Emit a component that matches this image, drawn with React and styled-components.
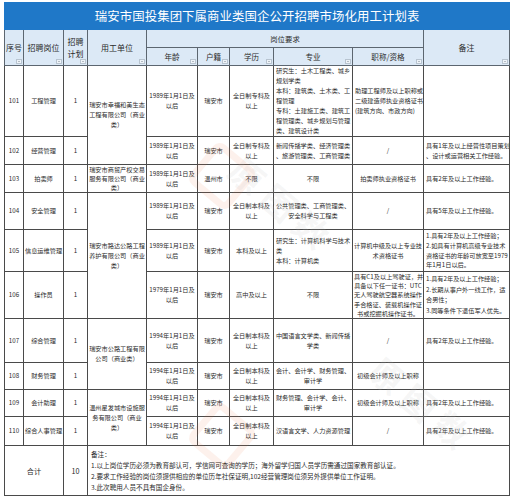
import React from "react";
import styled, { createGlobalStyle } from "styled-components";

const GlobalStyle = createGlobalStyle`
  html, body { margin: 0; padding: 0; background: #ffffff; }
  body { font-family: "Noto Sans CJK SC", "Noto Sans", sans-serif; color: #2a2a2a; }
`;

const Page = styled.div`
  position: relative;
  padding: 2px 0 0 4px;
  width: 514px;
  height: 500px;
  box-sizing: border-box;
  overflow: hidden;
`;

const Sheet = styled.table`
  border-collapse: collapse;
  table-layout: fixed;
  width: 505px;
`;

const TitleCell = styled.td`
  background: #1f78c8;
  color: #ffffff;
  font-size: 12.4px;
  text-align: center;
  height: 26px;
  padding: 0;
  border: 1px solid #1f78c8;
  letter-spacing: 0.1px;
`;

const HeadCell = styled.th`
  position: relative;
  background: #dce9f6;
  color: #2b2b2b;
  font-weight: 400;
  font-size: ${(p) => p.$size || 8}px;
  line-height: ${(p) => p.$lh || 11}px;
  border: 1px solid #5c6670;
  padding: 0;
  text-align: center;
  white-space: nowrap;
`;

const Arrow = styled.span`
  position: absolute;
  right: 1px;
  bottom: 1px;
  width: 4px;
  height: 3px;
  background: #eef3f8;
  border: 0.5px solid #b8c4d0;
  &::after {
    content: "";
    position: absolute;
    left: 1px;
    top: 1px;
    border-left: 1px solid transparent;
    border-right: 1px solid transparent;
    border-top: 1px solid #7a8590;
  }
`;

const Row = styled.tr`
  height: ${(p) => p.$h}px;
`;

const Cell = styled.td`
  border: 1px solid #4a4a4a;
  font-size: 6.2px;
  line-height: ${(p) => p.$lh || 10}px;
  text-align: ${(p) => p.$align || "center"};
  vertical-align: middle;
  padding: 0 ${(p) => (p.$align === "left" ? "1px 0 2px" : "1px")};
  white-space: nowrap;
  overflow: hidden;
  color: #2a2a2a;
`;

const NoteCell = styled(Cell)`
  font-size: 6.6px;
  line-height: 11px;
  padding-left: 3px;
`;

const TotalCell = styled(Cell)`
  font-size: 7.2px;
`;

const Watermark = styled.div`
  position: absolute;
  left: ${(p) => p.$x}px;
  top: ${(p) => p.$y}px;
  transform: rotate(40deg);
  font-size: 34px;
  font-weight: 700;
  color: rgba(190, 190, 190, 0.14);
  letter-spacing: 8px;
  pointer-events: none;
  white-space: nowrap;
`;

const Badge = styled.div`
  position: absolute;
  left: ${(p) => p.$x}px;
  top: ${(p) => p.$y}px;
  width: 38px;
  height: 38px;
  border-radius: 9px;
  border: 7px solid rgba(238, 120, 70, 0.1);
  transform: rotate(40deg);
  pointer-events: none;
`;

const Lines = ({ t }) =>
  t.split("\n").map((s, i, a) => (
    <React.Fragment key={i}>
      {s}
      {i < a.length - 1 && <br />}
    </React.Fragment>
  ));

const AGE89 = "1989年1月1日及\n以后";
const AGE94 = "1994年1月1日及\n以后";
const FULL_BK = "全日制本科及\n以上";
const EXP2 = "具有2年及以上工作经验。";

const rows = [
  {
    id: "101", post: "工程管理", h: 70,
    unit: { text: "瑞安市幸福和美生态\n工程有限公司（商业\n类）", span: 2 },
    age: AGE89, home: "瑞安市", edu: "全日制专科及\n以上",
    major: { text: "研究生：土木工程类、城乡\n规划学类\n本科：建筑类、土木类、工\n程管理\n专科：土建施工类、建筑工\n程管理类、城乡规划与管理\n类、建筑设计类", align: "left" },
    cert: { text: "助理工程师及以上职称或\n二级建造师执业资格证书\n(建筑方向、市政方向)", align: "left" },
    note: { text: "" },
  },
  {
    id: "102", post: "经营管理", h: 28,
    age: AGE89, home: "瑞安市", edu: "全日制专科及\n以上",
    major: { text: "新闻传播学类、经济管理类\n、旅游管理类、工商管理类" },
    cert: { text: "/" },
    note: { text: "具有1年及以上经营性项目策划\n、设计或运营相关工作经验。" },
  },
  {
    id: "103", post: "拍卖师", h: 28,
    unit: { text: "瑞安市商贸产权交易\n服务有限公司（商业\n类）", span: 1, lh: 9 },
    age: AGE89, home: "温州市", edu: "不限",
    major: { text: "不限" },
    cert: { text: "拍卖师执业资格证书" },
    note: { text: EXP2 },
  },
  {
    id: "104", post: "安全管理", h: 37,
    unit: { text: "瑞安市路达公路工程\n养护有限公司（商业\n类）", span: 3 },
    age: AGE89, home: "瑞安市", edu: FULL_BK,
    major: { text: "公共管理类、工商管理类、\n安全科学与工程类" },
    cert: { text: "/" },
    note: { text: "具有5年及以上工作经验。" },
  },
  {
    id: "105", post: "信息运维管理", h: 42,
    age: AGE89, home: "瑞安市", edu: "本科及以上",
    major: { text: "研究生：计算机科学与技术\n类\n本科：计算机类", align: "left" },
    cert: { text: "计算机中级及以上专业技\n术资格证书" },
    note: { text: "1.具有2年及以上工作经验；\n2.如具有计算机高级专业技术\n资格证书的年龄可放宽至1979\n年1月1日以后。", lh: 9.6 },
  },
  {
    id: "106", post: "操作员", h: 47,
    age: "1979年1月1日及\n以后", home: "瑞安市", edu: "高中及以上",
    major: { text: "不限" },
    cert: { text: "具有C1及以上驾驶证，并\n具备以下任一证书：UTC\n无人驾驶航空器系统操作\n手合格证、装载机操作证\n书或挖掘机操作证书。", lh: 9.2 },
    note: { text: "1.具有2年及以上工作经验；\n2.长期从事户外一线工作，适\n合男性；\n3.同等条件下退伍军人优先。", lh: 10.5 },
  },
  {
    id: "107", post: "综合管理", h: 44,
    unit: { text: "瑞安市公路工程有限\n公司（商业类）", span: 2 },
    age: AGE94, home: "瑞安市", edu: FULL_BK,
    major: { text: "中国语言文学类、新闻传播\n学类" },
    cert: { text: "/" },
    note: { text: EXP2 },
  },
  {
    id: "108", post: "财务管理", h: 27,
    age: AGE94, home: "瑞安市", edu: FULL_BK,
    major: { text: "会计、会计学、财务管理、\n审计学" },
    cert: { text: "初级会计师及以上职称" },
    note: { text: "" },
  },
  {
    id: "109", post: "会计助理", h: 27,
    unit: { text: "温州星发城市设施服\n务有限公司（商业\n类）", span: 2 },
    age: AGE94, home: "瑞安市", edu: FULL_BK,
    major: { text: "财务管理、会计学、会计、\n审计学" },
    cert: { text: "初级会计师及以上职称" },
    note: { text: EXP2 },
  },
  {
    id: "110", post: "综合人事管理", h: 29,
    age: AGE94, home: "瑞安市", edu: FULL_BK,
    major: { text: "汉语言文学、人力资源管理" },
    cert: { text: "/" },
    note: { text: EXP2 },
  },
];

const Head = ({ children, arrow = true, ...rest }) => (
  <HeadCell {...rest}>
    {children}
    {arrow && <Arrow />}
  </HeadCell>
);

export default function App() {
  return (
    <>
      <GlobalStyle />
      <Page>
        <Sheet>
          <colgroup>
            <col style={{ width: 19 }} />
            <col style={{ width: 40 }} />
            <col style={{ width: 24 }} />
            <col style={{ width: 59 }} />
            <col style={{ width: 51 }} />
            <col style={{ width: 32 }} />
            <col style={{ width: 44 }} />
            <col style={{ width: 79 }} />
            <col style={{ width: 71 }} />
            <col style={{ width: 86 }} />
          </colgroup>
          <tbody>
            <tr>
              <TitleCell colSpan={10}>
                瑞安市国投集团下属商业类国企公开招聘市场化用工计划表
              </TitleCell>
            </tr>
            <Row $h={18}>
              <Head rowSpan={2} $size={8}>序号</Head>
              <Head rowSpan={2} $size={8}>招聘岗位</Head>
              <Head rowSpan={2} $size={8} $lh={12}>
                招聘
                <br />
                计划
              </Head>
              <Head rowSpan={2} $size={8}>用工单位</Head>
              <Head colSpan={5} arrow={false} $size={7.4}>岗位要求</Head>
              <Head rowSpan={2} $size={8}>备注</Head>
            </Row>
            <Row $h={18}>
              <Head $size={7.6}>年龄</Head>
              <Head $size={7.6}>户籍</Head>
              <Head $size={7.6}>学历</Head>
              <Head $size={7.6}>专业</Head>
              <Head $size={7.6}>职称/资格</Head>
            </Row>
            {rows.map((r) => (
              <Row key={r.id} $h={r.h}>
                <Cell>{r.id}</Cell>
                <Cell>{r.post}</Cell>
                <Cell>1</Cell>
                {r.unit && (
                  <Cell rowSpan={r.unit.span} $lh={r.unit.lh || 10}>
                    <Lines t={r.unit.text} />
                  </Cell>
                )}
                <Cell>
                  <Lines t={r.age} />
                </Cell>
                <Cell>{r.home}</Cell>
                <Cell>
                  <Lines t={r.edu} />
                </Cell>
                <Cell $align={r.major.align}>
                  <Lines t={r.major.text} />
                </Cell>
                <Cell $align={r.cert.align} $lh={r.cert.lh}>
                  <Lines t={r.cert.text} />
                </Cell>
                <Cell $align="left" $lh={r.note.lh}>
                  <Lines t={r.note.text} />
                </Cell>
              </Row>
            ))}
            <Row $h={50}>
              <TotalCell colSpan={2}>合计</TotalCell>
              <TotalCell>10</TotalCell>
              <NoteCell colSpan={7} $align="left">
                <Lines
                  t={
                    "备注：\n1.以上岗位学历必须为教育部认可，学信网可查询的学历；海外留学归国人员学历需通过国家教育部认证。\n2.要求工作经验的岗位须提供相应的单位历年社保证明,102经营管理岗位须另外提供单位工作证明。\n3.此次聘用人员不具有国企身份。"
                  }
                />
              </NoteCell>
            </Row>
          </tbody>
        </Sheet>
        <Badge $x={196} $y={150} />
        <Badge $x={196} $y={410} />
        <Watermark $x={220} $y={180}>原图数</Watermark>
        <Watermark $x={360} $y={380}>原图数</Watermark>
      </Page>
    </>
  );
}
